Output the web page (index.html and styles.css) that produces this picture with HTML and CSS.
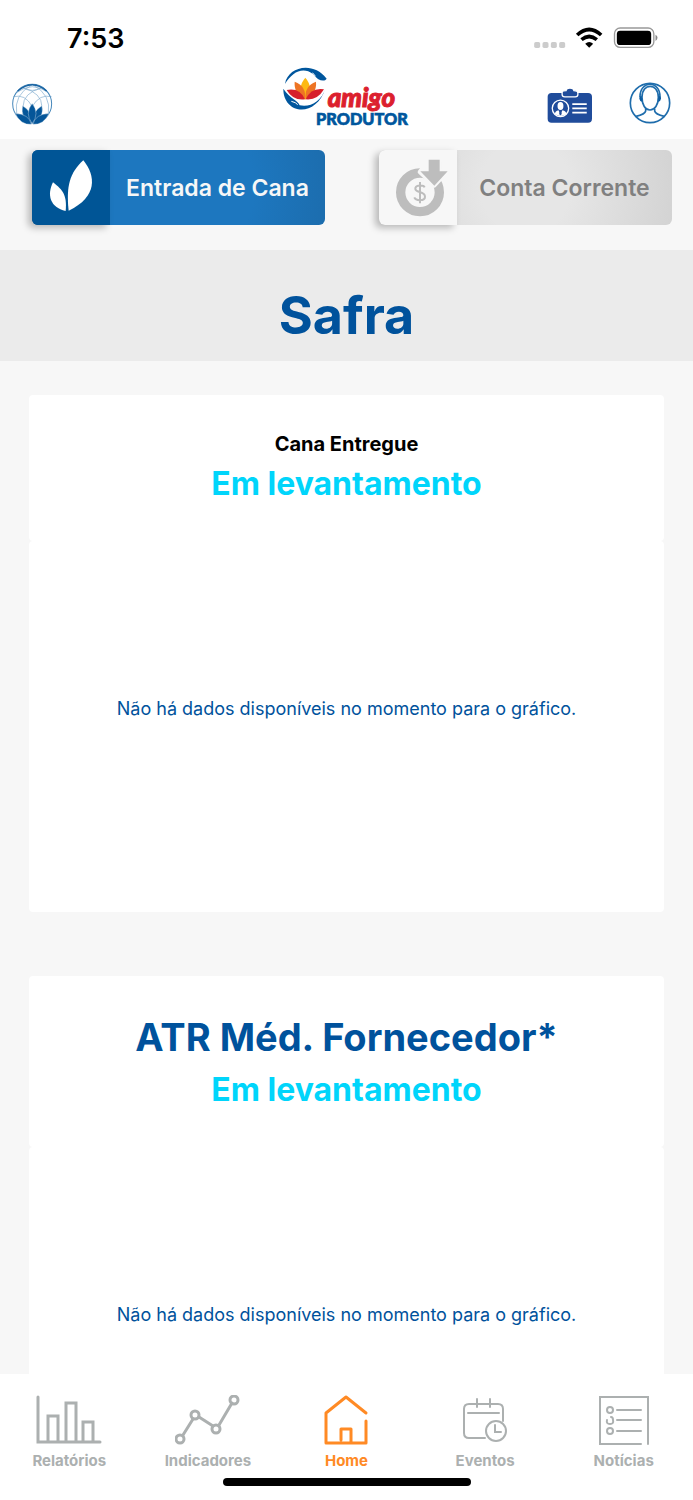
FILE: index.html
```html
<!DOCTYPE html>
<html lang="pt-BR">

<head>
    <meta charset="UTF-8">
    <meta name="viewport" content="width=device-width, initial-scale=1.0">
    <title>Amigo Produtor</title>
    <link rel="stylesheet" href="styles.css">
</head>

<body>
    <div class="status-bar">
        <span class="clock">7:53</span>
        <svg class="status-icons" viewBox="38 48 380 72" aria-hidden="true">
            <g fill="#ccc">
                <rect x="41" y="96" width="18" height="18" rx="5" />
                <rect x="66" y="96" width="18" height="18" rx="5" />
                <rect x="91" y="96" width="18" height="18" rx="5" />
                <rect x="116" y="96" width="18" height="18" rx="5" />
            </g>
            <g fill="none" stroke="#000" stroke-width="11">
                <path d="M170 75Q206 42 242 75" />
                <path d="M183 89Q206 70 229 89" />
            </g>
            <path d="M194 101Q206 91 218 101L206 113Z" />
            <rect x="282" y="54" width="118" height="58" rx="17" fill="none" stroke="#999" stroke-width="4" />
            <rect x="289" y="62" width="103" height="43" rx="10" />
            <path d="M405 74Q411 77 411 83T405 93Z" fill="#888" />
        </svg>
    </div>

    <header class="header">
        <a href="#" class="brand" aria-label="Início">
            <svg viewBox="37 250 122 124">
                <g fill="none" stroke="#82add0" stroke-width="2">
                    <path d="M70 320Q70 280 125 264M126 320Q126 280 70 264" />
                    <path d="M51 342Q41 285 97 255M145 342Q155 285 99 255" />
                    <path d="M41 291Q76 281 97 320M155 291Q120 281 97 320" />
                    <path d="M52 278Q97 244 144 278M70 264Q97 280 125 264" />
                </g>
                <circle cx="97" cy="312" r="58" fill="none" stroke="#4788bb" stroke-width="3" />
                <path d="M54 274Q97 236 140 274" fill="none" stroke="#1762a1" stroke-width="4" />
                <g fill="#055699" stroke="#fff">
                    <path d="M96 372Q60 353 69 318Q100 337 96 372Z" />
                    <path d="M98 372Q134 353 126 318Q94 337 98 372Z" />
                    <path d="M97 371Q74 340 97 311Q120 340 97 371Z" />
                    <path d="M95 373Q62 375 47 341Q87 342 95 373Z" />
                    <path d="M99 373Q132 375 147 341Q107 342 99 373Z" />
                </g>
            </svg>
        </a>

        <svg class="logo" viewBox="60 30 390 189" role="img" aria-label="Camigo Produtor">
            <g fill="#00569d">
                <path d="M75 87C83 36 158 17 200 71C193 82 173 77 159 57C128 34 96 52 75 87Z" />
                <path d="M70 101C69 176 166 193 197 99C184 139 151 158 119 151C113 134 91 133 70 101Z" />
            </g>
            <g fill="none" stroke="#fff" stroke-width="3">
                <path d="M157 54Q163 57 166 64" />
                <path d="M94 139Q108 142 113 149" />
            </g>
            <path d="M136 68Q164 100 136 134Q108 100 136 68Z" fill="#fdb913" />
            <g fill="#ee7424">
                <path d="M104 80Q140 93 135 133Q101 117 104 80Z" />
                <path d="M168 80Q132 93 137 133Q171 117 168 80Z" />
            </g>
            <g fill="#d71f2b">
                <path d="M80 105Q119 97 135 133Q99 138 80 105Z" />
                <path d="M192 103Q153 97 137 133Q172 137 192 103Z" />
            </g>
            <text x="168" y="210" class="logo-produtor">PRODUTOR</text>
            <text x="203" y="156" class="logo-amigo">amigo</text>
        </svg>

        <div class="header-actions">
            <button type="button" class="icon-btn id-btn" aria-label="Carteirinha">
                <svg viewBox="80 230 140 112">
                    <rect x="82" y="248" width="135" height="91" rx="12" fill="#204c9b" />
                    <path d="M126 247Q126 241 138 241Q139 233 150 233T162 241Q174 241 174 249V253Q174 260 166 260H134Q126 260 126 253Z" fill="#204c9b" stroke="#fff" stroke-width="4" />
                    <circle cx="121" cy="295" r="25" fill="#204c9b" stroke="#fff" stroke-width="4" />
                    <path d="M104 312Q105 303 115 301L121 313L127 301Q138 303 139 312Q121 324 104 312Z" fill="#fff" />
                    <ellipse cx="121" cy="288" rx="9" ry="12" fill="#fff" />
                    <path d="M119 303H123L125 312L121 317L117 312Z" fill="#204c9b" />
                    <path d="M157 282H201M157 295H201M157 308H201" stroke="#fff" stroke-width="5" />
                </svg>
            </button>
            <button type="button" class="icon-btn user-btn" aria-label="Perfil">
                <svg viewBox="326 217 126 126">
                    <g fill="none" stroke="#1f6dac" stroke-width="5">
                        <circle cx="389" cy="280" r="59" />
                        <path d="M365 263C365 219 414 219 414 263C414 286 403 301 389 301S365 286 365 263Z" />
                        <path d="M359 262C358 211 420 211 419 262" />
                        <path d="M376 298V304Q374 314 347 320M403 298V304Q405 314 432 320" />
                    </g>
                    <path d="M364 259Q356 260 357 267Q358 275 366 277ZM415 259Q423 260 422 267Q421 275 413 277Z" fill="#0c5c9f" />
                </svg>
            </button>
        </div>
    </header>

    <main class="content">
        <div class="switcher">
            <button type="button" class="switch-btn switch-active">
                <span class="switch-icon">
                    <svg viewBox="0 0 234 225">
                        <g fill="#fff">
                            <path d="M154 31C191 76 198 141 110 182C102 109 113 68 154 31Z" />
                            <path d="M63 97C94 121 105 137 101 183C54 173 44 134 63 97Z" />
                        </g>
                    </svg>
                </span>
                <span class="switch-label">Entrada de Cana</span>
            </button>
            <button type="button" class="switch-btn">
                <span class="switch-icon">
                    <svg viewBox="0 0 234 225">
                        <circle cx="123" cy="127" r="58" fill="none" stroke="#bdbdbd" stroke-width="28" />
                        <path d="M149 29H182V64H206L166 107L122 66Z" fill="#f7f7f7" stroke="#f7f7f7" stroke-width="12" stroke-linejoin="round" />
                        <path d="M149 29H182V64H206L166 107L124 64H149Z" fill="#bdbdbd" />
                        <path d="M137 112C133 104 108 104 109 117C110 130 138 121 138 140C138 154 110 153 106 142M123 96V160" fill="none" stroke="#bdbdbd" stroke-width="6" />
                    </svg>
                </span>
                <span class="switch-label">Conta Corrente</span>
            </button>
        </div>

        <h1 class="page-title">Safra</h1>

        <section class="card">
            <div class="card-head">
                <h2 class="card-name">Cana Entregue</h2>
                <p class="card-status">Em levantamento</p>
            </div>
            <p class="card-chart">Não há dados disponíveis no momento para o gráfico.</p>
        </section>

        <section class="card">
            <div class="card-head">
                <h2 class="card-title">ATR Méd. Fornecedor*</h2>
                <p class="card-status">Em levantamento</p>
            </div>
            <p class="card-chart">Não há dados disponíveis no momento para o gráfico.</p>
        </section>
    </main>

    <nav class="tab-bar">
        <div class="tabs">
            <a href="#" class="tab">
                <svg viewBox="0 0 66 52">
                    <path d="M2 2V47H64M12 47V21H22V47M30 47V8H40V47M47 47V27H57V47" />
                </svg>
                Relatórios
            </a>
            <a href="#" class="tab">
                <svg viewBox="0 0 66 52">
                    <path d="M8 40L18 24M24 22L38 31M44 30L57 8" />
                    <circle cx="5" cy="44" r="4" />
                    <circle cx="20" cy="20" r="4" />
                    <circle cx="41" cy="34" r="4" />
                    <circle cx="59" cy="5" r="4" />
                </svg>
                Indicadores
            </a>
            <a href="#" class="tab tab-current" aria-current="page">
                <svg viewBox="0 0 66 52" class="medium">
                    <path d="M53 18L33 2L13 18V48H53V26M28 45V34H38V48" />
                </svg>
                Home
            </a>
            <a href="#" class="tab">
                <svg viewBox="0 0 66 52" class="thin">
                    <path d="M33 43H17Q12 43 12 38V14Q12 9 17 9H46Q51 9 51 14V26M25 4V12M38 4V12M16 18H47" />
                    <circle cx="44" cy="36" r="10" />
                    <path d="M43 30V37H49" />
                </svg>
                Eventos
            </a>
            <a href="#" class="tab">
                <svg viewBox="0 0 66 52" class="thin">
                    <path d="M50 49H9V2H57V49" />
                    <circle cx="19" cy="15" r="3" />
                    <path d="M16 25Q15 29 19 29T22 25Q22 22 20 22" />
                    <circle cx="19" cy="36" r="3" />
                    <path d="M26 15H50M26 25H50M26 36H50" />
                </svg>
                Notícias
            </a>
        </div>
        <div class="home-indicator"></div>
    </nav>
</body>

</html>
```
FILE: styles.css
```css
* {
    box-sizing: border-box;
}

body {
    margin: 0;
    height: 100vh;
    display: flex;
    flex-direction: column;
    background-color: #fff;
    font-family: Inter, "Liberation Sans", sans-serif;
}

h1, h2, p {
    margin: 0;
}

button {
    border: 0;
    padding: 0;
    background: none;
    font-family: inherit;
    cursor: pointer;
}

svg {
    display: block;
}

/* status bar */
.status-bar {
    height: 65px;
    padding: 13px 33px 0 67px;
    display: flex;
    justify-content: space-between;
    align-items: flex-start;
    flex-shrink: 0;
}

.clock {
    font-size: 27px;
    line-height: 52px;
    font-weight: 600;
}

.status-icons {
    width: 127px;
    height: 24px;
    margin-top: 13px;
}

/* header */
.header {
    padding: 0 16px 11px 12px;
    display: grid;
    grid-template-columns: 1fr auto 1fr;
    align-items: end;
    flex-shrink: 0;
}

.brand {
    width: 41px;
    margin-bottom: 3px;
}

.logo {
    width: 130px;
    height: 63px;
}

.logo-amigo {
    font-family: Lato, sans-serif;
    font-size: 78px;
    font-weight: 900;
    font-style: italic;
    fill: #dc1f2e;
    stroke: #dc1f2e;
    stroke-width: 3px;
}

.logo-produtor {
    font-family: Lato, sans-serif;
    font-size: 49px;
    font-weight: 900;
    fill: #00569d;
    stroke: #00569d;
    stroke-width: 2px;
}

.header-actions {
    display: flex;
    justify-content: flex-end;
    align-items: flex-end;
    gap: 36px;
    margin: 0 6px 4px 0;
}

.id-btn {
    width: 46px;
}

.user-btn {
    width: 42px;
}

/* content */
.content {
    flex: 1;
    min-height: 0;
    overflow-y: auto;
    scrollbar-width: none;
    background-color: #f7f7f7;
}

.switcher {
    display: grid;
    grid-template-columns: 1fr 1fr;
    gap: 54px;
    padding: 11px 21px 25px 32px;
}

.switch-btn {
    height: 75px;
    display: flex;
    border-radius: 6px;
    color: #808080;
    background: radial-gradient(circle, #e6e6e6 30%, #d3d3d3);
}

.switch-icon {
    width: 78px;
    flex-shrink: 0;
    border-radius: 6px 0 0 6px;
    background-color: #f7f7f7;
    box-shadow: -4px 3px 7px rgba(0, 0, 0, 0.25);
}

.switch-label {
    flex: 1;
    align-self: center;
    font-size: 23px;
    font-weight: 600;
    white-space: nowrap;
}

.switch-active {
    color: #f7f7f7;
    background: radial-gradient(circle, #1d77bf 50%, #1c6dae);
}

.switch-active .switch-icon {
    background-color: #005596;
}

.page-title {
    padding: 32px 0 11px;
    background-color: #ebebeb;
    color: #00529c;
    font-size: 52px;
    line-height: 68px;
    text-align: center;
}

.card {
    margin: 34px 29px 64px;
    text-align: center;
}

.card + .card {
    margin-top: 0;
}

.card-head {
    padding: 33px 0;
    border-radius: 4px;
    background-color: #fff;
}

.card-name {
    font-size: 20px;
    line-height: 32px;
    font-weight: 700;
}

.card-title {
    color: #00529c;
    font-size: 38px;
    line-height: 57px;
}

.card-status {
    color: #00d5fb;
    font-size: 32px;
    line-height: 48px;
    font-weight: 700;
}

.card-chart {
    min-height: 371px;
    padding-bottom: 36px;
    display: flex;
    justify-content: center;
    align-items: center;
    border-radius: 4px;
    background-color: #fff;
    color: #00529c;
    font-size: 18px;
}

/* bottom tabs */
.tab-bar {
    height: 126px;
    padding-top: 21px;
    flex-shrink: 0;
    background-color: #fff;
}

.tabs {
    display: grid;
    grid-template-columns: repeat(5, 1fr);
}

.tab {
    display: flex;
    flex-direction: column;
    align-items: center;
    gap: 4px;
    color: #acb0b0;
    font-size: 15px;
    line-height: 20px;
    font-weight: 700;
    text-decoration: none;
}

.tab svg {
    width: 66px;
    height: 52px;
    fill: none;
    stroke: currentColor;
    stroke-width: 3;
    stroke-linecap: round;
}

.tab .medium {
    stroke-width: 3;
    stroke-linejoin: round;
}

.tab .thin {
    stroke-width: 2;
}

.tab-current {
    color: #ff8a24;
}

.home-indicator {
    width: 248px;
    height: 8px;
    margin: 7px auto 0;
    border-radius: 4px;
    background-color: #000;
}
```
